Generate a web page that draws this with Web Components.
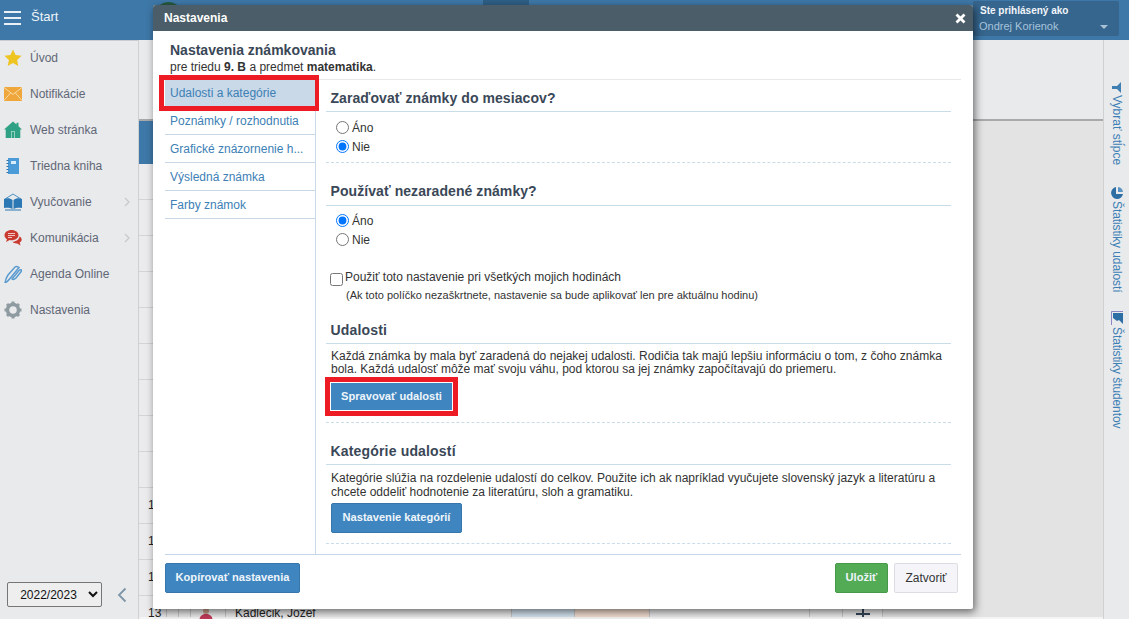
<!DOCTYPE html>
<html lang="sk">
<head>
<meta charset="utf-8">
<title>Nastavenia</title>
<style>
  html, body { margin: 0; height: 100%; overflow: hidden; }
  body { font: 12px/1.2 "Liberation Sans", Arial, sans-serif; color: #333; background: #e3e3e3; }
</style>
</head>
<body>
<app-shell>
  <top-bar slot="top"></top-bar>
  <side-nav slot="nav">
    <nav-item icon="star">Úvod</nav-item>
    <nav-item icon="mail">Notifikácie</nav-item>
    <nav-item icon="home">Web stránka</nav-item>
    <nav-item icon="note">Triedna kniha</nav-item>
    <nav-item icon="book" arrow>Vyučovanie</nav-item>
    <nav-item icon="chat" arrow>Komunikácia</nav-item>
    <nav-item icon="pen">Agenda Online</nav-item>
    <nav-item icon="gear">Nastavenia</nav-item>
  </side-nav>
  <back-table slot="main"></back-table>
  <side-rail slot="rail"></side-rail>
</app-shell>

<settings-modal>
  <span slot="title">Nastavenia</span>
  <span slot="heading">Nastavenia známkovania</span>
  <span slot="sub">pre triedu <b>9. B</b> a predmet <b>matematika</b>.</span>
  <tab-item slot="tabs" active marked>Udalosti a kategórie</tab-item>
  <tab-item slot="tabs">Poznámky / rozhodnutia</tab-item>
  <tab-item slot="tabs">Grafické znázornenie h...</tab-item>
  <tab-item slot="tabs">Výsledná známka</tab-item>
  <tab-item slot="tabs">Farby známok</tab-item>

  <form-section heading="Zaraďovať známky do mesiacov?" style="--top:10px;--hb:4px;--after:6px">
    <radio-row>Áno</radio-row>
    <radio-row checked>Nie</radio-row>
  </form-section>
  <form-section heading="Používať nezaradené známky?" plain style="--top:20px;--hb:5px;--pad:5px;--after:0">
    <radio-row checked>Áno</radio-row>
    <radio-row>Nie</radio-row>
    <check-row note="(Ak toto políčko nezaškrtnete, nastavenie sa bude aplikovať len pre aktuálnu hodinu)">Použiť toto nastavenie pri všetkých mojich hodinách</check-row>
  </form-section>
  <form-section heading="Udalosti" style="--top:20px;--hb:4px;--after:11px;--ls:.17px">
    <p-text>Každá známka by mala byť zaradená do nejakej udalosti. Rodičia tak majú lepšiu informáciu o tom, z čoho známka bola. Každá udalosť môže mať svoju váhu, pod ktorou sa jej známky započítavajú do priemeru.</p-text>
    <ui-btn marked style="--w:123px;--h:29px;margin:6px 0 0 -1px">Spravovať udalosti</ui-btn>
  </form-section>
  <form-section heading="Kategórie udalostí" style="--top:20px;--hb:4px;--after:10px;--ls:.17px">
    <p-text style="--lh:14px">Kategórie slúžia na rozdelenie udalostí do celkov. Použite ich ak napríklad vyučujete slovenský jazyk a literatúru a chcete oddeliť hodnotenie za literatúru, sloh a gramatiku.</p-text>
    <ui-btn style="--w:131px;--h:30px;margin-top:4px">Nastavenie kategórií</ui-btn>
  </form-section>

  <ui-btn slot="foot" style="--w:135px">Kopírovať nastavenia</ui-btn>
  <span slot="foot" style="flex:1"></span>
  <ui-btn slot="foot" kind="green" style="--w:53px">Uložiť</ui-btn>
  <ui-btn slot="foot" kind="plain" style="--w:64px;margin-left:6px">Zatvoriť</ui-btn>
</settings-modal>

<script>
const ICONS = {
  star: `<path fill="#eec421" d="M9 .5l2.6 5.6 6 .7-4.5 4.1 1.2 6.1L9 14l-5.3 3 1.2-6.1L.4 6.8l6-.7z"/>`,
  mail: `<path fill="#efa63a" d="M0 2h18v14H0z"/><path fill="none" stroke="#fbdca9" d="M0 2.500l9 7 9-7M0 15.500l6.500-7.500M18 15.500L11.500 8"/>`,
  home: `<path fill="#2fa184" d="M9 .5l3.500 3V1.800h2v3.500L18 8.500h-1.700V17H1.700V8.500H0z"/><path fill="#8fd0bd" d="M7 10h4v7H7z"/><path fill="#2fa184" d="M8 11h2v6H8z"/>`,
  note: `<path fill="#4a9bd8" d="M4 1h11v16H4z"/><path fill="#d9ecf9" d="M7 4h5v3H7z"/><path stroke="#2c6ea3" stroke-width="1" d="M2.500 3.500h2M2.500 6.500h2M2.500 9.500h2M2.500 12.500h2M2.500 15.500h2"/>`,
  book: `<path fill="none" stroke="#4a90c4" d="M1 6l8-5 8 5"/><path fill="#2c78b4" d="M0 6c3-1 6-1 8.500 1v9C6 14.500 3 14.500 0 15z"/><path fill="#2c78b4" d="M18 6c-3-1-6-1-8.500 1v9c2.500-1.500 5.500-1.500 8.500-1z"/><path stroke="#2c78b4" d="M1 17h16"/>`,
  chat: `<path fill="#c93b30" d="M7.500 1C3.500 1 .5 3.300.5 6.200c0 1.700 1 3.100 2.500 4L2 13l3.700-2c.6.100 1.200.200 1.800.200 4 0 7-2.300 7-5S11.500 1 7.500 1z"/><path fill="#c93b30" d="M15.500 7.500c1.300.7 2.200 1.800 2.200 3.100 0 1.200-.8 2.300-2 3l.8 2.900-3.300-2c-2 .1-3.800-.5-4.800-1.700 3.800-.2 6.800-2.400 7.100-5.300z"/><path stroke="#f3c5c1" d="M4 4.500h7M4 6.500h7M4 8.500h4"/>`,
  pen: `<path fill="none" stroke="#5a9bd0" stroke-width="1.500" d="M1 18c.5-3 1.500-6 3-8l7-8c1.500-1 3.500 0 4 .500l-9 11c-1.500 2-3 3.500-5 4.500z"/><path fill="none" stroke="#5a9bd0" stroke-width="1.500" d="M8 14l7-8.500c1-1 2.500-1 3 0l-6 7.500c-1.500 1.500-3 2-4 1z"/>`,
  gear: `<circle cx="9" cy="9" r="5.500" fill="none" stroke="#8e9ba0" stroke-width="3.500"/><path stroke="#8e9ba0" stroke-width="3" d="M9 .5v3M9 14.500v3M.5 9h3M14.500 9h3M3 3l2 2M13 13l2 2M15 3l-2 2M5 13l-2 2"/>`
};

class AppShell extends HTMLElement {
  constructor() {
    super();
    this._root = this.attachShadow({ mode: "open" });
  }
  connectedCallback() {
    this._root.innerHTML = `
      <style>
        :host { display: grid; grid-template-columns: 139px 1fr 26px; grid-template-rows: 40px 1fr; height: 619px; width: 1129px; overflow: hidden; }
        .top { grid-column: 1 / -1; display: block; }
      </style>
      <div class="top"><slot name="top"></slot></div>
      <slot name="nav"></slot>
      <slot name="main"></slot>
      <slot name="rail"></slot>
    `;
  }
}

class TopBar extends HTMLElement {
  constructor() {
    super();
    this._root = this.attachShadow({ mode: "open" });
  }
  connectedCallback() {
    this._root.innerHTML = `
      <style>
        :host { display: flex; height: 40px; background: #3e78a8; color: #fff; align-items: flex-start; position: relative; overflow: hidden; }
        .burger { flex: none; width: 17px; margin: 11px 10px 0 4px; display: grid; gap: 4px; }
        .burger i { display: block; height: 2px; background: #e9f0f6; }
        .name { flex: none; width: 28px; font-size: 13px; margin-top: 9px; color: #eef4f9; }
        .logo { flex: none; width: 27px; height: 27px; margin: 2px 0 0 96px; background: #28593f; border-radius: 50%; }
        .tab { flex: none; width: 46px; height: 6px; margin-left: 301px; background: #2f5f86; }
        .user { flex: none; margin: 1px 10px 0 auto; width: 139px; height: 35px; padding-left: 7px; background: #36658d; border-radius: 2px; position: relative; }
        .user b { display: block; font-size: 10px; margin-top: 4px; color: #f2f6fa; }
        .user span { display: block; font-size: 11px; margin-top: 3px; margin-left: -1px; color: #a6c4dc; }
        .caret { position: absolute; right: 11px; top: 24px; border: 4px solid transparent; border-top: 4px solid #a9c2d6; border-bottom: 0; }
      </style>
      <div class="burger"><i></i><i></i><i></i></div>
      <div class="name">Štart</div>
      <div class="logo"></div>
      <div class="tab"></div>
      <div class="user"><b>Ste prihlásený ako</b><span>Ondrej Korienok</span><div class="caret"></div></div>
    `;
  }
}

class SideNav extends HTMLElement {
  constructor() {
    super();
    this._root = this.attachShadow({ mode: "open" });
  }
  connectedCallback() {
    this._root.innerHTML = `
      <style>
        :host { display: flex; flex-direction: column; height: 579px; background: #e9eaec; border-right: 1px solid #cfd0d2; box-sizing: border-box; padding-bottom: 12px; box-shadow: inset 0 1px 0 #c9ccd0; }
        .list { flex: 1; }
        .foot { display: flex; align-items: center; padding-left: 7px; }
        select { width: 95px; height: 25px; font: 12px "Liberation Sans", Arial, sans-serif; color: #111; text-align: center; background: #eeeeef; border: 1px solid #767676; border-radius: 2px; padding: 0 4px; }
        svg { margin-left: 15px; }
      </style>
      <div class="list"><slot></slot></div>
      <div class="foot">
        <select><option>2022/2023</option></select>
        <svg width="10" height="16" viewBox="0 0 10 16"><path fill="none" stroke="#7d95a8" stroke-width="1.800" d="M8.500 1.500L2 8l6.500 6.500"/></svg>
      </div>
    `;
  }
}

class NavItem extends HTMLElement {
  constructor() {
    super();
    this._root = this.attachShadow({ mode: "open" });
  }
  connectedCallback() {
    const icon = ICONS[this.getAttribute("icon")] || "";
    const arrow = this.hasAttribute("arrow")
      ? `<svg class="arrow" width="6" height="10" viewBox="0 0 6 10"><path fill="none" stroke="#c6c8cb" stroke-width="1.200" d="M1 1l4 4-4 4"/></svg>`
      : "";
    this._root.innerHTML = `
      <style>
        :host { display: flex; align-items: center; height: 36px; padding-left: 4px; color: #5f6776; font-size: 12px; }
        .icon { flex: none; margin-right: 8px; }
        .arrow { margin-left: auto; margin-right: 8px; }
      </style>
      <svg class="icon" width="18" height="18" viewBox="0 0 18 18">${icon}</svg>
      <slot></slot>
      ${arrow}
    `;
  }
}

class BackTable extends HTMLElement {
  constructor() {
    super();
    this._root = this.attachShadow({ mode: "open" });
  }
  connectedCallback() {
    const blanks = new Array(9).fill(`<div class="row"></div>`).join("");
    this._root.innerHTML = `
      <style>
        :host { display: block; height: 579px; overflow: hidden; background: #e3e3e3; }
        .bar { height: 79px; background: #e9eaec; border-bottom: 2px solid #a9a9a9; }
        .table { width: 744px; background: #ebebed; }
        .head { height: 43px; background: #3e78a8; }
        .row { height: 35px; border-bottom: 1px solid #d3d4d6; padding-left: 9px; line-height: 35px; font-size: 12px; color: #222; }
        .last { display: grid; grid-template-columns: 28px 12px 12px 35px 286px 63px 75px 160px 33px 40px; height: 21px; font-size: 12px; color: #222; line-height: 34px; }
        .last > div { border-right: 1px solid #c6c7c9; white-space: nowrap; height: 21px; box-sizing: border-box; }
        .num { padding-left: 9px; }
        .name { padding-left: 9px; }
        .blue { background: #d5e5f1; }
        .peach { background: #f6dfd2; }
        .plus { display: flex; justify-content: center; }
        .strip { height: 2px; background: #f4f4f4; }
      </style>
      <div class="bar"></div>
      <div class="table">
        <div class="head"></div>
        ${blanks}
        <div class="row">10</div>
        <div class="row">11</div>
        <div class="row">12</div>
        <div class="last">
          <div class="num">13</div><div></div><div></div>
          <div><svg width="14" height="12" viewBox="0 0 14 12" style="margin:12px 0 0 8px;display:block"><circle cx="7" cy="3" r="3" fill="#c9a08c"/><path fill="#c23a58" d="M.5 12c0-4 3-6 6.500-6s6.500 2 6.500 6z"/></svg></div>
          <div class="name">Kadlecik, Jozef</div>
          <div class="blue"></div><div class="peach"></div><div></div><div></div>
          <div class="plus"><svg width="14" height="21" viewBox="0 0 14 21"><path stroke="#35465a" stroke-width="2" d="M0 18h14M7 13v8"/></svg></div>
        </div>
      </div>
      <div class="strip"></div>
    `;
  }
}

class SideRail extends HTMLElement {
  constructor() {
    super();
    this._root = this.attachShadow({ mode: "open" });
  }
  connectedCallback() {
    this._root.innerHTML = `
      <style>
        :host { display: block; height: 579px; background: #e9eaec; border-left: 1px solid #cfd0d2; box-sizing: border-box; padding-top: 42px; }
        .it { display: flex; flex-direction: row; align-items: center; writing-mode: vertical-rl; color: #3d80b5; font-size: 12px; width: 25px; line-height: 25px; }
        .it svg { flex: none; margin-bottom: 2px; }
        .a { margin-top: 22px; letter-spacing: -.1px; }
        .b { margin-top: 18px; letter-spacing: -.1px; }
      </style>
      <div class="it"><svg width="9" height="11" viewBox="0 0 9 11"><path fill="#3f7fb2" d="M9 0v11L5 7H0V4h5z"/></svg>Vybrať stĺpce</div>
      <div class="it a"><svg width="12" height="12" viewBox="0 0 12 12"><path fill="#2d6fa5" d="M5 0a6 6 0 1 0 7 7H5z"/><path fill="#5a94c2" d="M7 0a6 6 0 0 1 5 5H7z"/></svg>Štatistiky udalostí</div>
      <div class="it b"><svg width="12" height="14" viewBox="0 0 12 14"><path fill="none" stroke="#8b86c4" d="M.5 14V.5H12"/><path fill="#2d6fa5" d="M2 2h10v11L8 9l-2 1-4-3z"/></svg>Štatistiky študentov</div>
    `;
  }
}

class SettingsModal extends HTMLElement {
  constructor() {
    super();
    this._root = this.attachShadow({ mode: "open" });
  }
  connectedCallback() {
    this._root.innerHTML = `
      <style>
        :host { position: absolute; left: 153px; top: 5px; width: 820px; height: 604px; display: flex; flex-direction: column; background: #fff; border-radius: 3px 3px 2px 2px; box-shadow: 2px 3px 8px rgba(0,0,0,.55); }
        .title { flex: none; height: 26px; display: flex; align-items: center; padding: 0 7px 0 11px; background: #4a5d68; color: #fff; font-weight: bold; font-size: 12px; border-radius: 3px 3px 0 0; }
        .title svg { margin-left: auto; }
        .body { flex: 1; display: flex; flex-direction: column; padding: 0 12px; min-height: 0; }
        .head { flex: none; height: 49px; box-sizing: border-box; padding: 11px 0 0 5px; border-bottom: 1px solid #e8e9ea; }
        .h { font-size: 14px; font-weight: bold; color: #3a4757; line-height: 16px; }
        .s { font-size: 12px; color: #333; line-height: 14px; margin-top: 2px; }
        .mid { flex: 1; display: flex; min-height: 0; }
        .tabs { flex: none; width: 150px; border-right: 1px solid #c9d8e6; }
        .pane { flex: 1; overflow: hidden; padding: 0 10px 0 10px; }
        .foot { flex: none; height: 55px; box-sizing: border-box; padding: 8px 3px 0 0; display: flex; align-items: flex-start; border-top: 1px solid #c4d6e6; }
      </style>
      <div class="title"><slot name="title"></slot>
        <svg width="11" height="11" viewBox="0 0 11 11"><path stroke="#fff" stroke-width="2.800" d="M1.500 1.500l8 8M9.500 1.500l-8 8"/></svg>
      </div>
      <div class="body">
        <div class="head">
          <div class="h"><slot name="heading"></slot></div>
          <div class="s"><slot name="sub"></slot></div>
        </div>
        <div class="mid">
          <div class="tabs"><slot name="tabs"></slot></div>
          <div class="pane"><slot></slot></div>
        </div>
        <div class="foot"><slot name="foot"></slot></div>
      </div>
    `;
  }
}

class TabItem extends HTMLElement {
  constructor() {
    super();
    this._root = this.attachShadow({ mode: "open" });
  }
  connectedCallback() {
    this._root.innerHTML = `
      <style>
        :host { display: block; height: 28px; box-sizing: border-box; padding-left: 5px; line-height: 28px; border-bottom: 1px solid #c9d8e6; color: #3d80b5; font-size: 12px; position: relative; }
        :host([active]) { height: 26px; line-height: 26px; margin-bottom: 1px; background: #c9d9e8; border-bottom: 0; }
        :host([marked])::after { content: ""; position: absolute; left: -6px; right: -4px; top: -5px; bottom: -5px; border: 5px solid #ed1c24; border-right-width: 4px; box-shadow: inset 1px 0 0 #fff; pointer-events: none; }
      </style>
      <slot></slot>
    `;
  }
}

class FormSection extends HTMLElement {
  constructor() {
    super();
    this._root = this.attachShadow({ mode: "open" });
  }
  connectedCallback() {
    this._root.innerHTML = `
      <style>
        :host { display: block; padding-top: var(--top, 10px); padding-bottom: var(--after, 8px); border-bottom: 1px dashed #c9dcea; }
        :host([plain]) { border-bottom: 0; }
        h3 { margin: 0; padding: 0 0 var(--hb, 5px) 4.500px; font-size: 14px; line-height: 17px; font-weight: bold; color: #3a4757; letter-spacing: var(--ls, .07px); border-bottom: 1px solid #c9dcea; }
        .c { padding: var(--pad, 6px) 0 0 5px; }
      </style>
      <h3>${this.getAttribute("heading")}</h3>
      <div class="c"><slot></slot></div>
    `;
  }
}

class RadioRow extends HTMLElement {
  constructor() {
    super();
    this._root = this.attachShadow({ mode: "open" });
  }
  connectedCallback() {
    const on = this.hasAttribute("checked") ? "checked" : "";
    this._root.innerHTML = `
      <style>
        :host { display: flex; align-items: center; height: 19px; padding-left: 5px; font-size: 12px; color: #333; }
        input { margin: 0 3px 0 0; width: 13px; height: 13px; }
        span { padding-top: 2px; }
      </style>
      <input type="radio" ${on}><span><slot></slot></span>
    `;
  }
}

class CheckRow extends HTMLElement {
  constructor() {
    super();
    this._root = this.attachShadow({ mode: "open" });
  }
  connectedCallback() {
    this._root.innerHTML = `
      <style>
        :host { display: block; margin: 21px 0 0 -1px; font-size: 12px; color: #333; }
        .l { display: flex; align-items: center; height: 15px; }
        input { margin: 3px 2px 0 0; width: 13px; height: 13px; }
        .n { font-size: 11px; margin: 4px 0 0 16px; line-height: 13px; }
      </style>
      <div class="l"><input type="checkbox"><slot></slot></div>
      <div class="n">${this.getAttribute("note")}</div>
    `;
  }
}

class PText extends HTMLElement {
  constructor() {
    super();
    this._root = this.attachShadow({ mode: "open" });
  }
  connectedCallback() {
    this._root.innerHTML = `
      <style>:host { display: block; font-size: 12px; line-height: var(--lh, 13px); color: #333; }</style>
      <slot></slot>
    `;
  }
}

class UiBtn extends HTMLElement {
  constructor() {
    super();
    this._root = this.attachShadow({ mode: "open" });
  }
  connectedCallback() {
    this._root.innerHTML = `
      <style>
        :host { display: inline-flex; align-items: center; justify-content: center; box-sizing: border-box; width: var(--w); height: var(--h, 30px); background: #3f85bf; color: #eef5fb; font-weight: bold; font-size: 11.100px; border-radius: 2px; border: 1px solid #3776aa; position: relative; }
        :host([kind="green"]) { background: #53ab56; border-color: #47994a; }
        :host([kind="plain"]) { background: #f5f5f9; border-color: #dcdde2; color: #333; font-weight: normal; font-size: 12px; }
        :host([marked]) { border: 1px solid #fff; border-radius: 0; outline: 5px solid #ed1c24; outline-offset: 0; }
      </style>
      <slot></slot>
    `;
  }
}

customElements.define("app-shell", AppShell);
customElements.define("top-bar", TopBar);
customElements.define("side-nav", SideNav);
customElements.define("nav-item", NavItem);
customElements.define("back-table", BackTable);
customElements.define("side-rail", SideRail);
customElements.define("settings-modal", SettingsModal);
customElements.define("tab-item", TabItem);
customElements.define("form-section", FormSection);
customElements.define("radio-row", RadioRow);
customElements.define("check-row", CheckRow);
customElements.define("p-text", PText);
customElements.define("ui-btn", UiBtn);
</script>
</body>
</html>
